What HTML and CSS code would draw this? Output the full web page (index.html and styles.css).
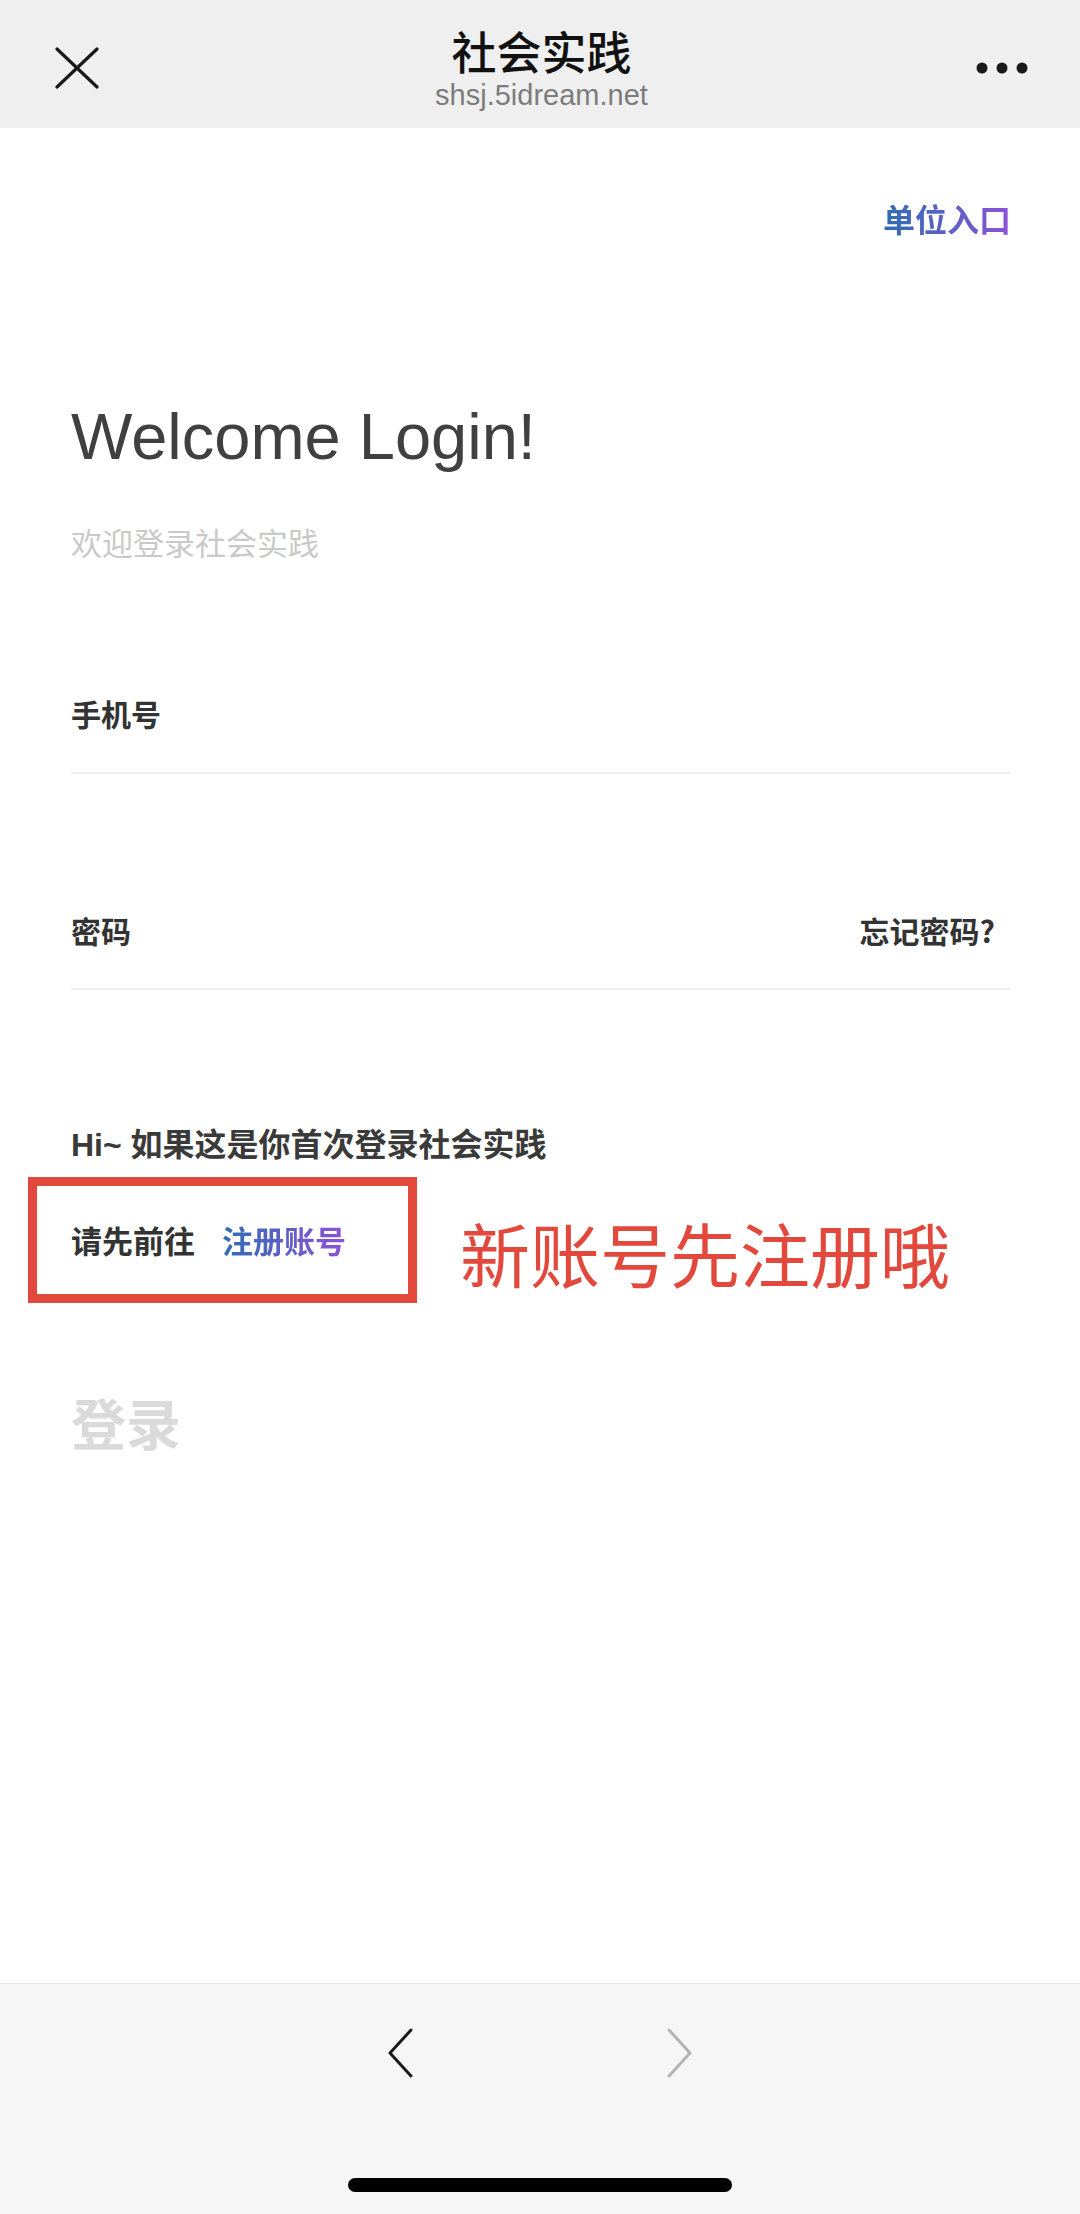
FILE: index.html
```html
<!DOCTYPE html>
<html lang="zh-CN">
<head>
  <meta charset="UTF-8" />
  <meta name="viewport" content="width=device-width, initial-scale=1.0"/>
  <title>社会实践</title>
  <link rel="stylesheet" href="styles.css">
</head>
<body>

  <header class="topbar">
    <svg class="nav-icon close-icon" width="44" height="42" viewBox="0 0 44 42">
      <path d="M2 2 L42 40 M42 2 L2 40" stroke="#1a1a1a" stroke-width="3.2" stroke-linecap="round" fill="none"/>
    </svg>
    <div class="titles">
      <div class="page-title">社会实践</div>
      <div class="page-url">shsj.5idream.net</div>
    </div>
    <svg class="nav-icon more-icon" width="52" height="12" viewBox="0 0 52 12">
      <circle cx="6" cy="6" r="5.5" fill="#1a1a1a"/>
      <circle cx="26" cy="6" r="5.5" fill="#1a1a1a"/>
      <circle cx="46" cy="6" r="5.5" fill="#1a1a1a"/>
    </svg>
  </header>

  <main class="login">
    <div class="unit-row">
      <a class="gradient-link unit-link" href="#">单位入口</a>
    </div>

    <h1 class="welcome">Welcome Login!</h1>
    <p class="subtitle">欢迎登录社会实践</p>

    <div class="field">
      <span class="field-label">手机号</span>
    </div>

    <div class="field field-password">
      <span class="field-label">密码</span>
      <a class="forgot" href="#">忘记密码?</a>
    </div>

    <p class="hint">Hi~ 如果这是你首次登录社会实践</p>

    <div class="register-row">
      <div class="register-box">
        <span>请先前往</span>
        <a class="gradient-link" href="#">注册账号</a>
      </div>
      <span class="note">新账号先注册哦</span>
    </div>

    <button class="login-btn">登录</button>
  </main>

  <footer class="bottombar">
    <div class="arrows">
      <svg width="26" height="50" viewBox="0 0 26 50">
        <path d="M24 2 L3 25 L24 48" stroke="#1a1a1a" stroke-width="3" stroke-linecap="round" stroke-linejoin="round" fill="none"/>
      </svg>
      <svg width="26" height="50" viewBox="0 0 26 50">
        <path d="M2 2 L23 25 L2 48" stroke="#b3b3b3" stroke-width="3" stroke-linecap="round" stroke-linejoin="round" fill="none"/>
      </svg>
    </div>
    <div class="home-indicator"></div>
  </footer>

</body>
</html>
```

FILE: styles.css
```css
body {
  margin: 0;
  width: 1080px;
  height: 2214px;
  display: flex;
  flex-direction: column;
  background-color: #fff;
  font-family: "Liberation Sans", "Noto Sans CJK SC", sans-serif;
  color: #333;
  overflow: hidden;
}

a {
  text-decoration: none;
}

/* top navigation bar */
.topbar {
  height: 128px;
  flex-shrink: 0;
  background-color: #efefef;
  display: grid;
  grid-template-columns: 1fr auto 1fr;
  align-items: start;
  padding: 0 52px 0 55px;
}

.close-icon {
  margin-top: 47px;
  justify-self: start;
}

.more-icon {
  margin-top: 62px;
  justify-self: end;
}

.titles {
  padding-top: 25px;
  text-align: center;
}

.page-title {
  font-family: "Noto Sans CJK SC", sans-serif;
  font-size: 45px;
  line-height: 52px;
  font-weight: 500;
  color: #111;
}

.page-url {
  font-family: "Liberation Sans", sans-serif;
  font-size: 29px;
  line-height: 36px;
  color: #7c7c7c;
}

/* login form */
.login {
  flex: 1;
  padding: 0 69px 0 71px;
}

.gradient-link {
  background: linear-gradient(90deg, #2f6db3, #8d52d6);
  -webkit-background-clip: text;
  background-clip: text;
  color: transparent;
  font-weight: bold;
}

.unit-row {
  margin-top: 68px;
  display: flex;
  justify-content: flex-end;
}

.unit-link {
  font-family: "Noto Sans CJK SC", sans-serif;
  font-size: 32px;
  line-height: 45px;
}

.welcome {
  margin: 156px 0 0;
  font-family: "Liberation Sans", sans-serif;
  font-size: 65px;
  line-height: 80px;
  font-weight: normal;
  color: #404040;
}

.subtitle {
  margin: 43px 0 0;
  font-family: "Noto Sans CJK SC", sans-serif;
  font-size: 31px;
  line-height: 44px;
  color: #c9c9c9;
}

.field {
  display: flex;
  justify-content: space-between;
  margin-top: 128px;
  padding: 0 16px 38px 0;
  border-bottom: 2px solid #efefef;
}

.field-password {
  margin-top: 135px;
  padding-bottom: 37px;
}

.field-label,
.forgot {
  font-family: "Noto Sans CJK SC", sans-serif;
  font-size: 30px;
  line-height: 42px;
  font-weight: bold;
  color: #333;
}

.hint {
  margin: 133px 0 0;
  font-family: "Liberation Sans", "Noto Sans CJK SC", sans-serif;
  font-size: 32px;
  line-height: 44px;
  font-weight: bold;
  color: #3a3a3a;
}

.register-row {
  margin-top: 10px;
  display: flex;
  align-items: center;
}

/* red annotation frame drawn on the screenshot */
.register-box {
  margin-left: -43px;
  width: 389px;
  box-sizing: border-box;
  border: 9px solid #e2483c;
  padding: 33px 0 33px 34px;
  display: flex;
  gap: 27px;
  font-family: "Noto Sans CJK SC", sans-serif;
  font-size: 31px;
  line-height: 42px;
  font-weight: bold;
  color: #333;
}

.note {
  margin: 26px 0 0 43px;
  font-family: "Noto Sans CJK SC", sans-serif;
  font-size: 70px;
  line-height: 90px;
  color: #e2483c;
}

.login-btn {
  display: block;
  margin-top: 83px;
  padding: 0;
  border: none;
  background: none;
  font-family: "Noto Sans CJK SC", sans-serif;
  font-size: 55px;
  line-height: 70px;
  font-weight: bold;
  color: #dadada;
}

/* browser bottom bar */
.bottombar {
  height: 231px;
  flex-shrink: 0;
  background-color: #f6f6f6;
  border-top: 1px solid #e4e4e4;
  box-sizing: border-box;
  display: flex;
  flex-direction: column;
  align-items: center;
}

.arrows {
  margin-top: 44px;
  display: flex;
  gap: 254px;
}

.home-indicator {
  margin-top: 100px;
  width: 384px;
  height: 14px;
  border-radius: 7px;
  background-color: #000;
}
```
